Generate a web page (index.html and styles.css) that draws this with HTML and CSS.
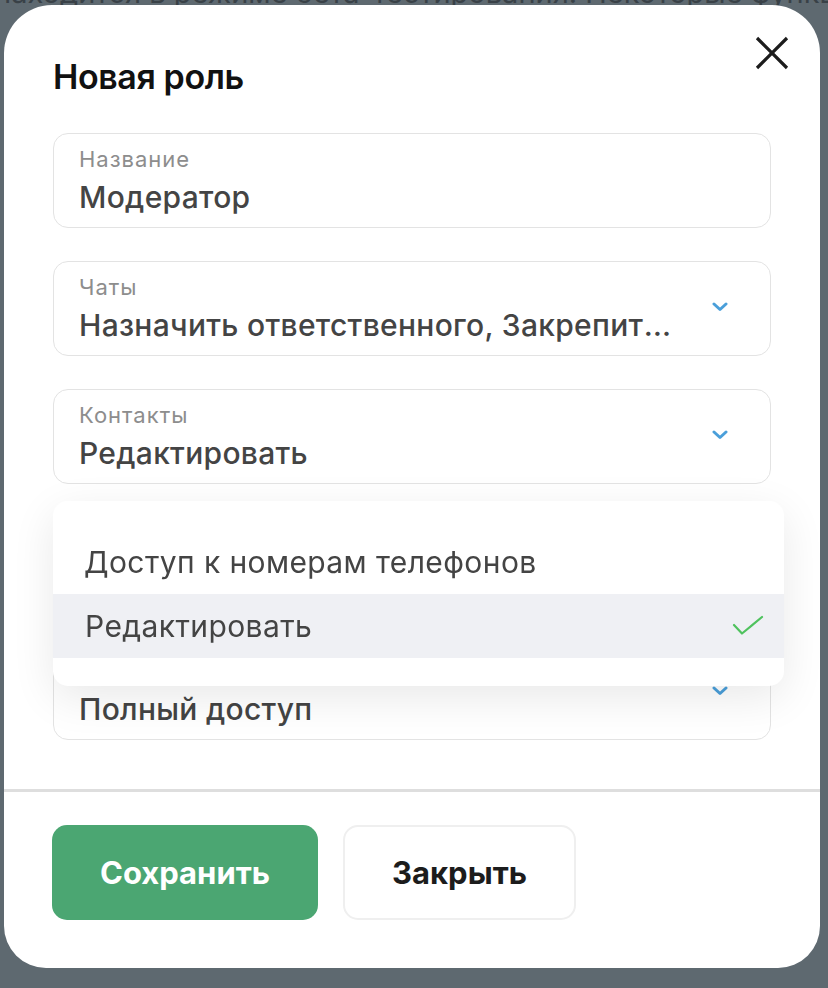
FILE: index.html
```html
<!DOCTYPE html>
<html lang="ru">
  <head>
    <meta charset="UTF-8" />
    <meta name="viewport" content="width=device-width, initial-scale=1.0" />
    <title>Новая роль</title>
    <link rel="stylesheet" href="styles.css">
  </head>
  <body>
    <div class="page-note">находится в режиме бета-тестирования. Некоторые функции</div>

    <div class="modal">
      <button class="close" aria-label="Закрыть">
        <svg width="34" height="34" viewBox="0 0 34 34">
          <path d="M2 2 L32 32 M32 2 L2 32" stroke="#1c1c1c" stroke-width="3.2" fill="none" />
        </svg>
      </button>

      <div class="modal-body">
        <h2 class="modal-title">Новая роль</h2>

        <div class="fields">
          <div class="field">
            <div class="field-label">Название</div>
            <div class="field-value">Модератор</div>
          </div>

          <div class="field select">
            <div class="field-text">
              <div class="field-label">Чаты</div>
              <div class="field-value">Назначить ответственного, Закрепить сообщение</div>
            </div>
            <svg class="chevron" width="16" height="10" viewBox="0 0 16 10">
              <path d="M2 2 L8 7.5 L14 2" stroke="#4a9fda" stroke-width="3" fill="none" stroke-linecap="round" stroke-linejoin="round" />
            </svg>
          </div>

          <div class="field select open">
            <div class="field-text">
              <div class="field-label">Контакты</div>
              <div class="field-value">Редактировать</div>
            </div>
            <svg class="chevron" width="16" height="10" viewBox="0 0 16 10">
              <path d="M2 2 L8 7.5 L14 2" stroke="#4a9fda" stroke-width="3" fill="none" stroke-linecap="round" stroke-linejoin="round" />
            </svg>

            <ul class="dropdown">
              <li class="option">Доступ к номерам телефонов</li>
              <li class="option selected">
                Редактировать
                <svg class="check" width="32" height="24" viewBox="0 0 32 24">
                  <path d="M2 11 L10 19.5 L30 3" stroke="#4fc25e" stroke-width="2.2" fill="none" stroke-linecap="round" stroke-linejoin="round" />
                </svg>
              </li>
            </ul>
          </div>

          <div class="field select">
            <div class="field-text">
              <div class="field-label">Сделки</div>
              <div class="field-value">Просмотр</div>
            </div>
            <svg class="chevron" width="16" height="10" viewBox="0 0 16 10">
              <path d="M2 2 L8 7.5 L14 2" stroke="#4a9fda" stroke-width="3" fill="none" stroke-linecap="round" stroke-linejoin="round" />
            </svg>
          </div>

          <div class="field select">
            <div class="field-text">
              <div class="field-label">Настройки</div>
              <div class="field-value">Полный доступ</div>
            </div>
            <svg class="chevron" width="16" height="10" viewBox="0 0 16 10">
              <path d="M2 2 L8 7.5 L14 2" stroke="#4a9fda" stroke-width="3" fill="none" stroke-linecap="round" stroke-linejoin="round" />
            </svg>
          </div>
        </div>
      </div>

      <div class="modal-footer">
        <button class="btn btn-primary">Сохранить</button>
        <button class="btn btn-secondary">Закрыть</button>
      </div>
    </div>
  </body>
</html>
```

FILE: styles.css
```css
*,
*::before,
*::after {
  box-sizing: border-box;
  padding: 0;
  margin: 0;
}
body {
  height: 100vh;
  overflow: hidden;
  background: #5e6970;
  font-family: Inter, "Noto Sans", sans-serif;
  color: #444;
}
.page-note {
  margin-top: -22px;
  margin-left: -6px;
  width: 840px;
  overflow: hidden;
  white-space: nowrap;
  font-size: 29px;
  line-height: 30px;
  color: #394147;
}
.modal {
  position: fixed;
  top: 5px;
  left: 4px;
  width: 816px;
  height: 963px;
  background: #fff;
  border-radius: 48px 48px 42px 42px;
  display: flex;
  flex-direction: column;
}
.close {
  position: absolute;
  top: 31px;
  right: 31px;
  width: 34px;
  height: 34px;
  border: none;
  background: none;
  cursor: pointer;
}
.modal-body {
  padding: 54px 49px 49px;
  border-bottom: 3px solid #dedede;
}
.modal-title {
  font-size: 34px;
  line-height: 36px;
  font-weight: 600;
  color: #111;
  letter-spacing: -0.4px;
}
.fields {
  margin-top: 38px;
  display: flex;
  flex-direction: column;
  gap: 33px;
}
.field {
  position: relative;
  height: 95px;
  padding: 13px 25px 12px;
  border: 1px solid #e3e3e3;
  border-radius: 15px;
}
.select {
  display: flex;
  align-items: center;
  gap: 24px;
}
.field-text {
  flex: 1;
  min-width: 0;
  align-self: stretch;
}
.field-label {
  font-size: 22px;
  line-height: 24px;
  letter-spacing: 1px;
  color: #8d8d8d;
}
.field-value {
  margin-top: 8px;
  font-size: 30px;
  line-height: 36px;
  font-weight: 500;
  letter-spacing: 0.3px;
  color: #444;
  white-space: nowrap;
  overflow: hidden;
  text-overflow: ellipsis;
}
.chevron {
  flex-shrink: 0;
  margin-right: 17px;
  margin-top: -4px;
}
.dropdown {
  position: absolute;
  z-index: 10;
  top: 111px;
  left: -1px;
  width: 731px;
  padding: 29px 0 28px;
  list-style: none;
  background: #fff;
  border-radius: 15px;
  box-shadow: 0 12px 44px rgba(0, 0, 0, 0.09);
}
.option {
  height: 64px;
  padding: 0 31px;
  display: flex;
  align-items: center;
  justify-content: space-between;
  font-size: 30px;
  letter-spacing: 0.4px;
  color: #444;
}
.option.selected {
  padding-left: 32px;
  background: #eff0f4;
}
.check {
  margin-right: -11px;
}
.modal-footer {
  padding: 33px 48px;
  display: flex;
  gap: 25px;
}
.btn {
  height: 95px;
  border-radius: 15px;
  font-family: Inter, "Noto Sans", sans-serif;
  font-size: 31px;
  font-weight: 700;
  cursor: pointer;
}
.btn-primary {
  width: 266px;
  border: none;
  background: #4ba672;
  color: #fff;
}
.btn-secondary {
  width: 233px;
  border: 2px solid #efefef;
  background: #fff;
  color: #1c1c1c;
}
```
